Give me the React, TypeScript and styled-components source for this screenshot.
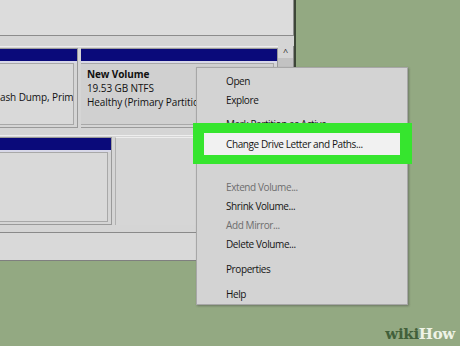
import React from "react";
import styled, { createGlobalStyle } from "styled-components";

const Global = createGlobalStyle`
  html, body { margin: 0; padding: 0; }
  body { background: #93a982; }
`;

const Page = styled.div`
  position: relative;
  width: 460px;
  height: 346px;
  overflow: hidden;
  background: #93a982;
  font-family: "Open Sans", "Noto Sans", sans-serif;
`;

const Window = styled.div`
  width: 296px;
  height: 261px;
  background: #d5d5d5;
  border-right: 2px solid #3d4638;
  border-bottom: 1px solid #7f7f7f;
  display: flex;
  flex-direction: column;
  box-sizing: border-box;
`;

const TopPane = styled.div`
  height: 36px;
  width: 294px;
  flex: none;
  box-sizing: border-box;
  background: #dcdcdc;
  border-bottom: 1px solid #8c8c8c;
  border-right: 1px solid #8c8c8c;
`;

const DiskPane = styled.div`
  display: flex;
  flex-direction: row;
  margin-top: 10px;
  height: 186px;
  flex: none;
`;

const DiskColumn = styled.div`
  width: 278px;
  display: flex;
  flex-direction: column;
  gap: 7px;
`;

const DiskRow = styled.div<{ $h: number }>`
  display: flex;
  flex-direction: row;
  gap: 3px;
  height: ${(p) => p.$h}px;
  padding-top: 1px;
  border-top: 1px solid #eeeeee;
`;

const Partition = styled.div<{ $w: number }>`
  width: ${(p) => p.$w}px;
  display: flex;
  flex-direction: column;
  box-sizing: border-box;
  border: 1px solid #9a9a9a;
  border-left: none;
  overflow: hidden;
`;

const BlueBar = styled.div`
  height: 12px;
  background: #0a0a7a;
  border-bottom: 2px solid #d8d8e8;
  flex: none;
`;

const PartBody = styled.div<{ $selected?: boolean }>`
  flex: 1;
  padding: 3px 0 0 6px;
  margin: 0 3px 2px 0;
  border: 1px solid #a8a8a8;
  border-left: none;
  background: ${(p) => (p.$selected ? "#d0d0d0" : "#d9d9d9")};
  font-size: 10px;
  line-height: 14px;
  color: #111;
  white-space: nowrap;
  overflow: hidden;
  letter-spacing: -0.1px;
`;

const PartBodyRight = styled(PartBody)`
  text-align: right;
  padding: 26px 1px 0 0;
`;

const Bold = styled.div`
  font-weight: 700;
`;

const EmptyRegion = styled.div`
  flex: 1;
  border-top: 1px solid #ededed;
  border-left: 1px solid #b0b0b0;
  background: #d6d6d6;
`;

const Scrollbar = styled.div`
  width: 15px;
  display: flex;
  flex-direction: column;
  align-items: center;
  border-right: 1px solid #8c8c8c;
`;

const Arrow = styled.div`
  height: 12px;
  font-size: 9px;
  line-height: 12px;
  color: #222;
`;

const Track = styled.div`
  width: 15px;
  flex: 1;
  background: #c2c2c2;
`;

const StatusBar = styled.div`
  flex: 1;
  border-top: 1px solid #8a8a8a;
  background: #d9d9d9;
`;

const Menu = styled.div`
  position: absolute;
  left: 196px;
  top: 67px;
  width: 212px;
  height: 238px;
  box-sizing: border-box;
  background: #d3d3d3;
  border: 1px solid #a7a7a7;
  box-shadow: 1px 1px 2px rgba(60, 60, 60, 0.45);
  padding-top: 4px;
  display: flex;
  flex-direction: column;
`;

const Item = styled.div<{ $disabled?: boolean; $h?: number }>`
  height: ${(p) => p.$h ?? 19}px;
  line-height: ${(p) => p.$h ?? 19}px;
  padding-left: 29px;
  font-size: 10px;
  letter-spacing: -0.4px;
  color: ${(p) => (p.$disabled ? "#6e6e6e" : "#151515")};
  white-space: nowrap;
`;

const Sep = styled.div<{ $h: number }>`
  height: ${(p) => p.$h}px;
`;

const Highlight = styled.div`
  position: absolute;
  left: 193px;
  top: 123px;
  width: 219px;
  height: 41px;
  box-sizing: border-box;
  background: #36e52e;
  padding: 10px 12px 9px 11px;
`;

const HighlightInner = styled.div`
  height: 100%;
  background: #f1f1f1;
  padding-left: 22px;
  font-size: 10px;
  line-height: 22px;
  letter-spacing: -0.4px;
  color: #151515;
  white-space: nowrap;
`;

const Logo = styled.div`
  position: absolute;
  right: 5px;
  bottom: 3px;
  font-family: "DejaVu Serif", "Liberation Serif", serif;
  font-weight: 700;
  font-size: 15px;
  letter-spacing: -0.3px;
`;

const Wiki = styled.span`
  color: #42603a;
`;

const How = styled.span`
  color: #eef3e6;
`;

export default function App() {
  return (
    <>
      <Global />
      <Page>
        <Window>
          <TopPane />
          <DiskPane>
            <DiskColumn>
              <DiskRow $h={80}>
                <Partition $w={78}>
                  <BlueBar />
                  <PartBodyRight>ash Dump, Prima</PartBodyRight>
                </Partition>
                <Partition $w={197}>
                  <BlueBar />
                  <PartBody $selected>
                    <Bold>New Volume</Bold>
                    <div>19.53 GB NTFS</div>
                    <div>Healthy (Primary Partition)</div>
                  </PartBody>
                </Partition>
              </DiskRow>
              <DiskRow $h={88}>
                <Partition $w={112}>
                  <BlueBar />
                  <PartBody />
                </Partition>
                <EmptyRegion />
              </DiskRow>
            </DiskColumn>
            <Scrollbar>
              <Arrow>^</Arrow>
              <Track />
            </Scrollbar>
          </DiskPane>
          <StatusBar />
        </Window>

        <Menu>
          <Item>Open</Item>
          <Item>Explore</Item>
          <Sep $h={5} />
          <Item $h={18}>Mark Partition as Active</Item>
          <Item $h={17}>Change Drive Letter and Paths...</Item>
          <Item $h={17}>Format...</Item>
          <Sep $h={12} />
          <Item $disabled>Extend Volume...</Item>
          <Item>Shrink Volume...</Item>
          <Item $disabled>Add Mirror...</Item>
          <Item>Delete Volume...</Item>
          <Sep $h={6} />
          <Item>Properties</Item>
          <Sep $h={6} />
          <Item>Help</Item>
        </Menu>

        <Highlight>
          <HighlightInner>Change Drive Letter and Paths...</HighlightInner>
        </Highlight>

        <Logo>
          <Wiki>wiki</Wiki>
          <How>How</How>
        </Logo>
      </Page>
    </>
  );
}
